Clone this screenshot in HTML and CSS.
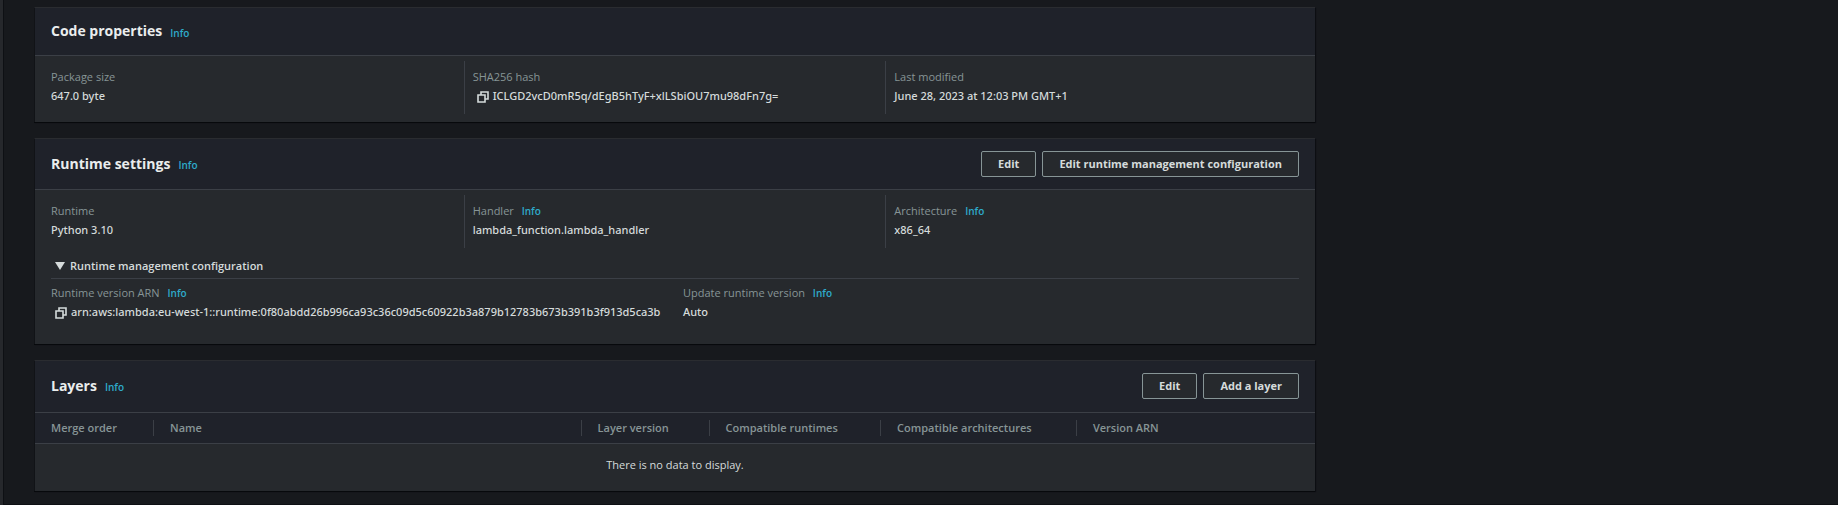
FILE: index.html
```html
<!DOCTYPE html>
<html lang="en">
<head>
<meta charset="utf-8">
<title>Function code</title>
<link rel="stylesheet" href="styles.css">
</head>
<body>
<svg class="sprite" aria-hidden="true">
  <symbol id="copy" viewBox="0 0 12 12">
    <path d="M1 4h7v7H1zM4 4V1h7v7H8" fill="none" stroke="currentColor" stroke-width="1.6"/>
  </symbol>
</svg>
<main class="page">
  <section class="panel">
    <header class="panel-header">
      <h2>Code properties</h2><a class="info" href="#">Info</a>
    </header>
    <dl class="columns thirds">
      <div class="column">
        <dt>Package size</dt>
        <dd>647.0 byte</dd>
      </div>
      <div class="column">
        <dt>SHA256 hash</dt>
        <dd class="copyable"><button class="copy" aria-label="Copy hash"><svg><use href="#copy"/></svg></button>ICLGD2vcD0mR5q/dEgB5hTyF+xlLSbiOU7mu98dFn7g=</dd>
      </div>
      <div class="column">
        <dt>Last modified</dt>
        <dd>June 28, 2023 at 12:03 PM GMT+1</dd>
      </div>
    </dl>
  </section>

  <section class="panel">
    <header class="panel-header">
      <h2>Runtime settings</h2><a class="info" href="#">Info</a>
      <div class="actions">
        <button class="btn">Edit</button>
        <button class="btn">Edit runtime management configuration</button>
      </div>
    </header>
    <dl class="columns thirds">
      <div class="column">
        <dt>Runtime</dt>
        <dd>Python 3.10</dd>
      </div>
      <div class="column">
        <dt>Handler <a class="info" href="#">Info</a></dt>
        <dd>lambda_function.lambda_handler</dd>
      </div>
      <div class="column">
        <dt>Architecture <a class="info" href="#">Info</a></dt>
        <dd>x86_64</dd>
      </div>
    </dl>
    <details open>
      <summary><svg class="caret" viewBox="0 0 10 8"><path d="M0 0h10L5 8z" fill="currentColor"/></svg>Runtime management configuration</summary>
      <dl class="columns halves">
        <div class="column">
          <dt>Runtime version ARN <a class="info" href="#">Info</a></dt>
          <dd class="copyable"><button class="copy" aria-label="Copy ARN"><svg><use href="#copy"/></svg></button>arn:aws:lambda:eu-west-1::runtime:0f80abdd26b996ca93c36c09d5c60922b3a879b12783b673b391b3f913d5ca3b</dd>
        </div>
        <div class="column">
          <dt>Update runtime version <a class="info" href="#">Info</a></dt>
          <dd>Auto</dd>
        </div>
      </dl>
    </details>
  </section>

  <section class="panel">
    <header class="panel-header table-title">
      <h2>Layers</h2><a class="info" href="#">Info</a>
      <div class="actions">
        <button class="btn">Edit</button>
        <button class="btn">Add a layer</button>
      </div>
    </header>
    <table>
      <colgroup><col class="c-order"><col class="c-name"><col class="c-version"><col class="c-runtimes"><col class="c-arch"><col></colgroup>
      <thead>
        <tr>
          <th scope="col"><span>Merge order</span></th>
          <th scope="col"><span>Name</span></th>
          <th scope="col"><span>Layer version</span></th>
          <th scope="col"><span>Compatible runtimes</span></th>
          <th scope="col"><span>Compatible architectures</span></th>
          <th scope="col"><span>Version ARN</span></th>
        </tr>
      </thead>
      <tbody>
        <tr><td colspan="6">There is no data to display.</td></tr>
      </tbody>
    </table>
  </section>
</main>
</body>
</html>
```
FILE: styles.css
```css
:root {
  --page: #17191d;
  --header: #1f222a;
  --body: #26292d;
  --line: #3b3f46;
  --label: #879596;
  --text: #d5dbdb;
  --link: #2eabcb;
}

* { box-sizing: border-box; }

body {
  margin: 0;
  min-height: 100vh;
  background: var(--page);
  border-left: 3px solid #26282c;
  color: var(--text);
  font: 500 11px/19px "Open Sans", "Noto Sans", sans-serif;
}

h2, dl, dd { margin: 0; }

.sprite { display: none; }

.page {
  display: flex;
  flex-direction: column;
  gap: 16px;
  min-height: 100vh;
  padding: 7px 32px 12px 30px;
  border-left: 1px solid #0e1014;
  border-bottom: 1px solid #0e1014;
}

.panel {
  width: 100%;
  max-width: 1281px;
  border-top: 1px solid #2a2c30;
  border-left: 1px solid #111317;
  background: var(--body);
  box-shadow: 0 1px 0 #07090c, 1px 1px 1px #0c0e12;
}

.panel-header {
  display: flex;
  align-items: center;
  gap: 8px;
  padding: 12px 16px;
  background: var(--header);
  border-bottom: 1px solid var(--line);
}

.table-title { padding-bottom: 13px; }

h2 {
  padding-bottom: 2px;
  color: #eaeded;
  font-size: 14px;
  font-weight: 700;
  line-height: 21px;
}

.info {
  color: var(--link);
  font-size: 10px;
  font-weight: 600;
  line-height: 14px;
  text-decoration: none;
}

h2 + .info { padding-top: 2px; }

dt .info { margin-left: 5px; }

.actions {
  display: flex;
  gap: 6px;
  margin-left: auto;
}

.btn {
  height: 26px;
  padding: 0 16px 2px;
  background: var(--body);
  border: 1px solid #879596;
  border-radius: 2px;
  color: var(--text);
  font: 700 11px/19px "Open Sans", "Noto Sans", sans-serif;
}

.columns { display: grid; }

.thirds {
  grid-template-columns: repeat(3, 1fr);
  padding: 5px 8px 8px 7px;
}

.halves {
  grid-template-columns: repeat(2, 1fr);
  column-gap: 16px;
}

.column { padding: 6px 8px 9px; }

.thirds .column { border-left: 1px solid var(--line); }

.thirds .column:first-child { border-color: transparent; }

dt { color: var(--label); }

dd { font-family: "Noto Sans", "Open Sans", sans-serif; }

.copyable {
  display: flex;
  align-items: center;
  gap: 4px;
  padding-left: 4px;
  white-space: nowrap;
}

.copy {
  display: flex;
  padding: 2px 0 0;
  border: 0;
  background: none;
  color: inherit;
}

.copy svg {
  width: 12px;
  height: 12px;
}

details { padding: 0 16px 14px; }

summary {
  display: flex;
  align-items: center;
  gap: 5px;
  padding: 0 0 3px 4px;
  border-bottom: 1px solid var(--line);
  font-weight: 600;
  list-style: none;
}

.caret {
  width: 10px;
  height: 8px;
}

.halves .column { padding: 4px 0 9px; }

table {
  width: 100%;
  border-collapse: collapse;
  table-layout: fixed;
}

.c-order { width: 9.3%; }
.c-name { width: 33.4%; }
.c-version { width: 10%; }
.c-runtimes { width: 13.4%; }
.c-arch { width: 15.3%; }

thead {
  background: var(--header);
  border-bottom: 1px solid var(--line);
}

th {
  padding: 7px 0;
  color: var(--label);
  font-weight: 600;
  text-align: left;
}

th span {
  display: block;
  padding: 0 16px;
  border-right: 1px solid var(--line);
  line-height: 16px;
  white-space: nowrap;
}

th:last-child span { border-right: 0; }

td {
  padding: 11px 16px 17px;
  text-align: center;
}
```
